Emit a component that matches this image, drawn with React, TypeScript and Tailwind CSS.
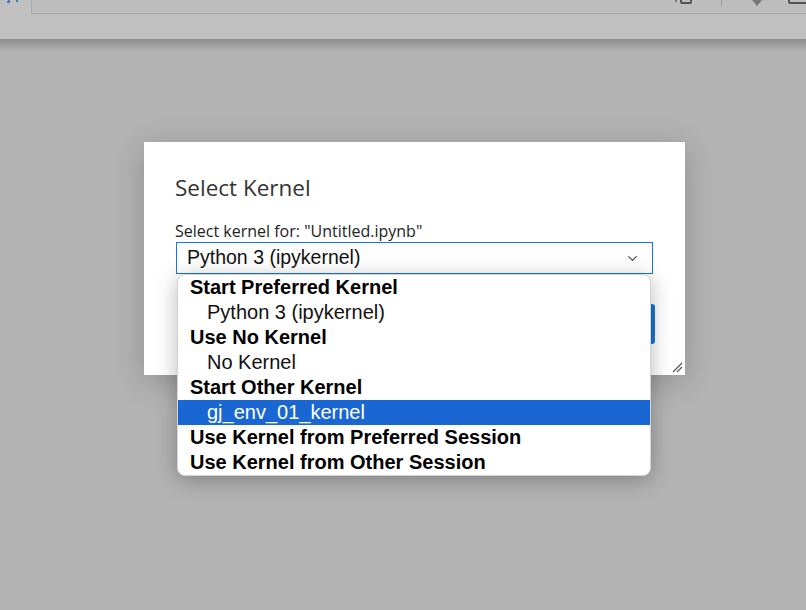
import { ChevronDown } from 'lucide-react';

const items: { label: string; header?: boolean; selected?: boolean }[] = [
  { label: 'Start Preferred Kernel', header: true },
  { label: 'Python 3 (ipykernel)' },
  { label: 'Use No Kernel', header: true },
  { label: 'No Kernel' },
  { label: 'Start Other Kernel', header: true },
  { label: 'gj_env_01_kernel', selected: true },
  { label: 'Use Kernel from Preferred Session', header: true },
  { label: 'Use Kernel from Other Session', header: true },
];

// native select popup, drawn open over the dialog
function KernelList() {
  return (
    <ul className="absolute left-[177px] top-[274px] w-[474px] overflow-hidden rounded-[8px] border border-[#d4d4d4] bg-white shadow-[0_4px_22px_rgba(0,0,0,0.28)] font-['Liberation_Sans',Arial,sans-serif] text-[20px] leading-[24px] text-black">
      {items.map((it) => (
        <li
          key={it.label}
          className={
            it.selected
              ? 'h-[25px] bg-[#1a67d3] pl-[29px] text-white'
              : it.header
                ? 'h-[25px] pl-[12px] font-bold'
                : 'h-[25px] pl-[29px] text-[#111]'
          }
        >
          {it.label}
        </li>
      ))}
    </ul>
  );
}

function Toolbar() {
  return (
    <div className="flex h-[39px] shrink-0 bg-[#c0c0c0]">
      <div className="flex w-[31px] shrink-0 items-start gap-[6px] pl-[7px]">
        <span className="h-[3px] w-[3px] shrink-0 border-b-2 border-r-2 border-[#3f7fc0]" />
        <span className="h-[2px] w-[2px] shrink-0 bg-[#3f7fc0]" />
      </div>
      <div className="flex h-[14px] flex-1 items-start overflow-hidden border-b border-l border-[#a9a9a9] bg-[#bdbdbd] pl-[643px]">
        <span className="h-[2px] w-[2px] shrink-0 bg-[#777]" />
        <span className="ml-[3px] mt-[-4px] h-[8px] w-[12px] shrink-0 rounded-[2px] border-2 border-[#555]" />
        <span className="ml-[29px] h-[6px] w-px shrink-0 bg-[#999]" />
        <span className="ml-[30px] h-0 w-0 shrink-0 border-x-[5px] border-t-[6px] border-x-transparent border-t-[#777]" />
        <span className="ml-[26px] mt-[-4px] h-[8px] w-[24px] shrink-0 rounded-[2px] border-2 border-[#555]" />
      </div>
    </div>
  );
}

export default function App() {
  return (
    <div className="relative flex h-[610px] w-[806px] flex-col overflow-hidden bg-[#b3b3b3]">
      <Toolbar />
      <div className="h-[12px] shrink-0 bg-gradient-to-b from-[#8c8c8c] to-[#b3b3b3]" />
      <div className="flex-1" />

      <div className="absolute left-[144px] top-[142px] h-[233px] w-[541px] bg-white pl-[31px] pr-[30px] pt-[31px] shadow-[0_6px_30px_rgba(0,0,0,0.2)]">
        <h2 className="font-['Open_Sans',sans-serif] text-[22.5px] font-normal leading-[30px] text-[#333]">
          Select Kernel
        </h2>
        <p className="mt-[18px] font-['Open_Sans',sans-serif] text-[16px] leading-[20px] text-[#222]">
          Select kernel for: "Untitled.ipynb"
        </p>
        <div className="ml-px mt-px flex h-[32px] w-[477px] items-center justify-between border border-[#1a73e8] bg-white pl-[10px] pr-[12px] font-['Liberation_Sans',Arial,sans-serif] text-[19.5px] text-[#111]">
          <span>Python 3 (ipykernel)</span>
          <ChevronDown size={15} strokeWidth={2.2} className="text-[#555]" />
        </div>
        <div className="ml-auto mt-[30px] h-[40px] w-[90px] rounded-[3px] bg-[#1976d2]" />
        <svg className="absolute bottom-[2px] right-[2px]" width="11" height="11" viewBox="0 0 11 11">
          <path d="M1 10 L10 1 M5 10 L10 5" stroke="#555" strokeWidth="1.2" />
        </svg>
      </div>

      <KernelList />
    </div>
  );
}
